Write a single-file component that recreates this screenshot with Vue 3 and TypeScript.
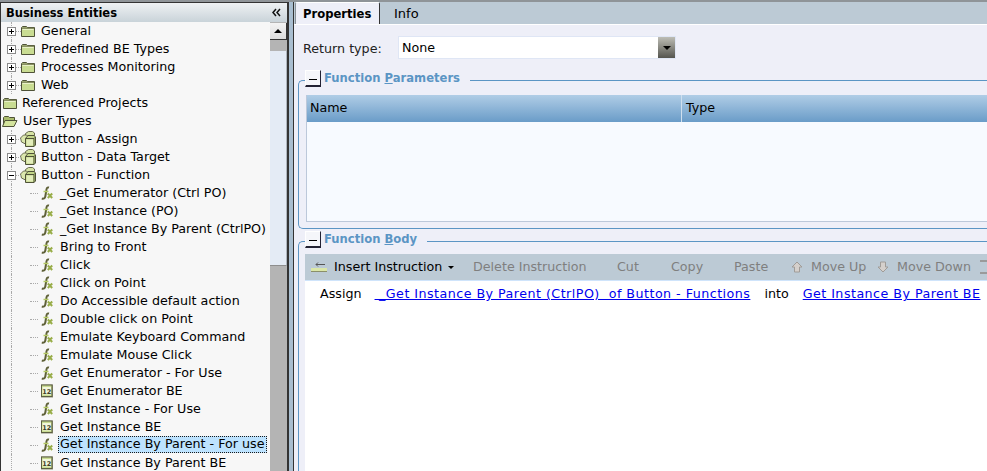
<script setup lang="ts">
type Row = { label: string; level: number; icon: string; toggle?: string; selected?: boolean }
const rows: Row[] = [
  { label: 'General', level: 1, icon: 'folder', toggle: '+' },
  { label: 'Predefined BE Types', level: 1, icon: 'folder', toggle: '+' },
  { label: 'Processes Monitoring', level: 1, icon: 'folder', toggle: '+' },
  { label: 'Web', level: 1, icon: 'folder', toggle: '+' },
  { label: 'Referenced Projects', level: 0, icon: 'folder' },
  { label: 'User Types', level: 0, icon: 'open' },
  { label: 'Button - Assign', level: 1, icon: 'cubes', toggle: '+' },
  { label: 'Button - Data Target', level: 1, icon: 'cubes', toggle: '+' },
  { label: 'Button - Function', level: 1, icon: 'cubes', toggle: '-' },
  { label: '_Get Enumerator (Ctrl PO)', level: 2, icon: 'fx' },
  { label: '_Get Instance (PO)', level: 2, icon: 'fx' },
  { label: '_Get Instance By Parent (CtrlPO)', level: 2, icon: 'fx' },
  { label: 'Bring to Front', level: 2, icon: 'fx' },
  { label: 'Click', level: 2, icon: 'fx' },
  { label: 'Click on Point', level: 2, icon: 'fx' },
  { label: 'Do Accessible default action', level: 2, icon: 'fx' },
  { label: 'Double click on Point', level: 2, icon: 'fx' },
  { label: 'Emulate Keyboard Command', level: 2, icon: 'fx' },
  { label: 'Emulate Mouse Click', level: 2, icon: 'fx' },
  { label: 'Get Enumerator - For Use', level: 2, icon: 'fx' },
  { label: 'Get Enumerator BE', level: 2, icon: 'num' },
  { label: 'Get Instance - For Use', level: 2, icon: 'fx' },
  { label: 'Get Instance BE', level: 2, icon: 'num' },
  { label: 'Get Instance By Parent - For use', level: 2, icon: 'fx', selected: true },
  { label: 'Get Instance By Parent BE', level: 2, icon: 'num' }
]
</script>

<template>
  <div class="app">
    <aside class="left">
      <header class="left-head">
        <span>Business Entities</span>
        <svg class="collapse" width="9" height="9" viewBox="0 0 9 9">
          <path d="M4 1L1 4.500l3 3.500M8 1L5 4.500l3 3.500" fill="none" stroke="#111" stroke-width="1.5" />
        </svg>
      </header>
      <div class="left-body">
        <ul class="tree">
          <li v-for="r in rows" :key="r.label" class="row" :class="'lvl' + r.level">
            <span v-if="r.level > 0" class="guide"></span>
            <span v-if="r.level === 2" class="dash"></span>
            <span v-if="r.toggle" class="toggle">
              <svg width="9" height="9" viewBox="0 0 9 9">
                <rect x="0.5" y="0.5" width="8" height="8" fill="#fff" stroke="#8a8a8a" />
                <path d="M2 4.500h5" stroke="#000" />
                <path v-if="r.toggle === '+'" d="M4.500 2v5" stroke="#000" />
              </svg>
              <span class="tdash"></span>
            </span>
            <svg v-if="r.icon === 'folder'" class="ico" width="14" height="16" viewBox="0 0 14 16">
              <path d="M.5 13.500v-9l1-1h4l1 1h7v9z" fill="#c9dc92" stroke="#4f5238" />
              <path d="M1 4.500h12v1.200H1z" fill="#6b6e4c" />
              <path d="M1.500 6.500h11" stroke="#e9f1c8" />
            </svg>
            <svg v-else-if="r.icon === 'open'" class="ico open" width="16" height="16" viewBox="0 0 16 16">
              <path d="M1.500 13.500v-9l1-1h4l1 1h5v3" fill="#a9bb6c" stroke="#4f5238" />
              <path d="M.5 13.500l2.500-6h12l-3 6z" fill="#d3e39c" stroke="#4f5238" />
            </svg>
            <svg v-else-if="r.icon === 'cubes'" class="ico cube" width="16" height="16" viewBox="0 0 16 16">
              <path d="M5.500 2.500l3-2h4l2 1.500v3h-9z" fill="#d6e3a4" stroke="#6a6d50" />
              <path d="M.5 7l3-3h3l2 2v5l-3 2-4-2z" fill="#dbe7ad" stroke="#6a6d50" />
              <path d="M5.500 7.500l2.500-3h6l1.500 1.500v8l-1.500 1.500h-8.500z" fill="#c2d588" stroke="#4f5238" />
              <path d="M5.500 7.500h8.500v8M14 7.500l1.500-1.500" fill="none" stroke="#4f5238" />
              <path d="M6.500 8.500h6.500v6h-6.500z" fill="#e3edbb" />
            </svg>
            <svg v-else-if="r.icon === 'fx'" class="ico" width="12" height="14" viewBox="0 0 12 14">
              <path d="M8 1.500C6 1 5.600 2.300 5.300 4.500L4.300 10.500C4 12.300 2.500 13 .8 12.500" fill="none" stroke="#5f6138" stroke-width="2" />
              <path d="M2.500 5.500h5" stroke="#b4c964" stroke-width="1.500" />
              <path d="M6.800 7.500l4.400 4.500M11.200 7.500l-4.400 4.500" stroke="#98ad48" stroke-width="2" />
            </svg>
            <svg v-else class="ico" width="12" height="14" viewBox="0 0 12 14">
              <rect x="0" y="0.500" width="12" height="13" fill="#8e9076" />
              <rect x="0.500" y="1" width="10.500" height="11.500" fill="#c9dc92" stroke="#5c5f42" />
              <rect x="1.500" y="3" width="8.500" height="7.500" fill="#f2f6dc" />
              <text x="5.800" y="9.500" text-anchor="middle" class="numtxt">12</text>
            </svg>
            <span class="label" :class="{ sel: r.selected }">{{ r.label }}</span>
          </li>
        </ul>
        <div class="scroll">
          <div class="sbtn"><i></i></div>
          <div class="strack-a"></div>
          <div class="sthumb"></div>
        </div>
      </div>
    </aside>

    <div class="split"></div>

    <main class="right">
      <nav class="tabs">
        <span class="tab active">Properties</span>
        <span class="tab">Info</span>
      </nav>
      <section class="content">
        <div class="ret">
          <span class="ret-label">Return type:</span>
          <div class="select">
            <span>None</span>
            <span class="drop"><i></i></span>
          </div>
        </div>

        <fieldset class="group params">
          <legend><span class="min"></span><b>Function <u>P</u>arameters</b></legend>
          <div class="table">
            <div class="thead">
              <span class="th name">Name</span>
              <span class="th">Type</span>
            </div>
          </div>
        </fieldset>

        <fieldset class="group body">
          <legend><span class="min"></span><b>Function <u>B</u>ody</b></legend>
          <div class="tools">
            <span class="tool main">
              <svg class="insert" width="16" height="12" viewBox="0 0 16 12">
                <rect x="0" y="7" width="16" height="4" fill="#dbe7a8" />
                <rect x="0" y="10" width="16" height="1" fill="#8a8f6a" />
                <path d="M5 3.500h9M5 3.500l2-2M5 3.500l2 2" stroke="#555" fill="none" />
              </svg>
              <span>Insert Instruction</span>
              <i class="caret"></i>
            </span>
            <span class="tool del">Delete Instruction</span>
            <span class="tool cut">Cut</span>
            <span class="tool copy">Copy</span>
            <span class="tool paste">Paste</span>
            <span class="tool up">
              <svg width="12" height="12" viewBox="0 0 12 12"><path d="M6 1l5 5H8.500v5h-5V6H1z" fill="#d5d0cc" stroke="#a09c98" /></svg>
              Move Up
            </span>
            <span class="tool down">
              <svg width="12" height="12" viewBox="0 0 12 12"><path d="M6 11l5-5H8.500V1h-5v5H1z" fill="#d5d0cc" stroke="#a09c98" /></svg>
              Move Down
            </span>
            <span class="more"></span>
          </div>
          <div class="stmt">
            <span class="word">Assign</span>
            <a class="l1">&nbsp;_Get Instance By Parent (CtrlPO)&nbsp; of Button - Functions</a>
            <span class="word into">into</span>
            <a class="l2">Get Instance By Parent BE</a>
          </div>
        </fieldset>
      </section>
    </main>
  </div>
</template>

<style>
html, body { margin: 0; overflow: hidden; background: #fff; }
</style>

<style scoped>
.app {
  width: 987px;
  height: 471px;
  display: flex;
  overflow: hidden;
  font: 12.7px/18px "DejaVu Sans", sans-serif;
  color: #000;
  background: #bccad5;
  border-top: 2px solid #8f9498;
  box-sizing: border-box;
}
b { font-weight: bold; }
.left {
  width: 289px;
  flex: none;
  display: flex;
  flex-direction: column;
  background: #f7f7f7;
  border-left: 1px solid #333;
  border-right: 2px solid #333;
  border-top: 1px solid #333;
  box-sizing: border-box;
}
.left-head {
  height: 19px;
  flex: none;
  display: flex;
  justify-content: space-between;
  align-items: center;
  padding: 0 6px 0 5px;
  font-weight: bold;
  font-size: 11.5px;
  background: linear-gradient(#eef1f3, #c9d3d9);
}
.left-body { flex: 1; display: flex; min-height: 0; }
.tree { flex: 1; margin: 0; padding: 0; list-style: none; overflow: hidden; min-width: 0; }
.row { height: 18px; display: flex; align-items: center; position: relative; white-space: nowrap; }
.lvl0 { padding-left: 1px; }
.lvl0 .ico { margin-right: 4px; }
.lvl0 .ico:not(.open) { margin-left: 1px; }
.lvl1 { padding-left: 6px; }
.lvl1 .ico { margin-right: 5px; }
.lvl1 .cube { margin-left: -1px; margin-right: 4px; }
.lvl2 { padding-left: 29px; }
.lvl2 .ico { margin-right: 6px; }
.guide { position: absolute; left: 10px; top: 0; bottom: 0; border-left: 1px dotted #aaa; }
.dash { width: 8px; flex: none; margin-right: 3px; border-top: 1px dotted #aaa; }
.toggle { display: flex; align-items: center; position: relative; width: 14px; flex: none; }
.toggle svg { display: block; position: relative; background: #fff; }
.tdash { width: 5px; border-top: 1px dotted #aaa; }
.ico { flex: none; display: block; }
.numtxt { font: bold 6.5px "DejaVu Sans", sans-serif; fill: #3d3f28; }
.label { padding: 0 1px; line-height: 16px; margin-top: -1px; }
.sel { background: #bde3ff; outline: 1px dotted #1a1a1a; outline-offset: -1px; margin: -1px 0 0 -1px; padding: 0 3px 1px 2px; line-height: 16px; }
.scroll { width: 17px; flex: none; display: flex; flex-direction: column; background: #b4b4b4; padding-top: 1px; box-sizing: border-box; }
.sbtn {
  height: 17px;
  flex: none;
  background: linear-gradient(#f4f4f4, #dcdcdc);
  border-right: 1px solid #333;
  border-bottom: 1px solid #333;
  box-sizing: border-box;
  display: flex;
  align-items: center;
  justify-content: center;
}
.sbtn i { border: 4px solid transparent; border-bottom: 4px solid #000; border-top: 0; }
.strack-a { height: 11px; flex: none; }
.sthumb { height: 215px; flex: none; background: #e4ebf5; border-right: 1px solid #aeb5bd; border-bottom: 1px solid #8e8e8e; box-sizing: border-box; }
.split {
  width: 5px;
  flex: none;
  background: #a9bed0;
  border-right: 1px solid #333;
  box-sizing: border-box;
}
.right { flex: 1; min-width: 0; display: flex; flex-direction: column; }
.tabs {
  height: 22px;
  flex: none;
  display: flex;
  background: #bccad5;
  padding-left: 1px;
}
.tab { height: 22px; line-height: 23px; margin-left: 14px; font-size: 13px; }
.tab.active {
  background: #eeeff8;
  font-weight: bold;
  font-size: 11.6px;
  margin-left: 0;
  padding-left: 7px;
  width: 85px;
  box-sizing: border-box;
  border-left: 1px solid #8a9299;
  border-right: 1px solid #333;
  border-top: 1px solid #fff;
  border-radius: 2px 2px 0 0;
}
.content { flex: 1; min-height: 0; background: #eeeff8; border-top: 1px solid #fff; padding-left: 4px; overflow: hidden; }
.ret { display: flex; align-items: center; height: 23px; margin-top: 11px; padding-left: 5px; }
.ret-label { width: 95px; flex: none; color: #222; padding-top: 2px; }
.select {
  width: 278px;
  height: 23px;
  box-sizing: border-box;
  background: #fff;
  display: flex;
  justify-content: space-between;
  border: 1px solid #dfe6f5;
  padding-left: 3px;
  line-height: 21px;
}
.drop {
  width: 17px;
  background: linear-gradient(#bdbdb5, #55554f);
  display: flex;
  align-items: center;
  justify-content: center;
}
.drop i { border: 4px solid transparent; border-top: 4px solid #000; border-bottom: 0; }
.group {
  margin: 0;
  padding: 0 0 0 7px;
  border: 0;
  border-top: 1px solid #5b95c4;
  border-left: 1px solid #5b95c4;
  border-radius: 5px 0 0 5px;
  min-width: 0;
}
.params { margin-top: 11px; height: 159px; border-bottom: 1px solid #5b95c4; box-sizing: border-box; }
.body { margin-top: 2px; height: 245px; box-sizing: border-box; }
legend {
  padding: 0 10px 0 0;
  margin-left: -1px;
  height: 20px;
  display: flex;
  align-items: flex-start;
  color: #5b95c4;
  background: #eeeff8;
  font-size: 11.6px;
  line-height: 17px;
}
.min {
  width: 16px;
  height: 17px;
  box-sizing: border-box;
  margin-right: 3px;
  background: linear-gradient(#000, #000) center 8px / 8px 1px no-repeat #f5f6fa;
  border-right: 1px solid #223;
  border-bottom: 2px solid #223;
  border-top: 1px solid #fff;
  border-left: 1px solid #fff;
}
.table { margin-top: 5px; height: 127px; background: #f7faff; border: 1px solid #bcc8da; border-top: 0; border-right: 0; box-sizing: border-box; }
.thead {
  height: 27px;
  display: flex;
  background: linear-gradient(#b0cde6, #6a9cc8);
}
.th { line-height: 26px; padding-left: 4px; }
.th.name { width: 375px; padding-left: 3px; border-right: 1px solid #cfdfee; box-sizing: border-box; }
.tools {
  height: 27px;
  margin: 3px 0 0 -1px;
  background: #bccad5;
  border-bottom: 1px solid #cfe4fb;
  box-sizing: border-box;
  display: flex;
  align-items: center;
  color: #7f7f7f;
  white-space: nowrap;
}
.tool { display: flex; align-items: center; gap: 8px; flex: none; }
.main { color: #000; margin-left: 6px; width: 162px; gap: 7px; }
.caret { border: 3.5px solid transparent; border-top: 3.5px solid #000; border-bottom: 0; margin-left: -1px; }
.del { width: 144px; }
.cut { width: 54px; }
.copy { width: 63px; }
.paste { width: 57px; }
.up { width: 86px; }
.down { width: 103px; }
.more { width: 8px; height: 10px; border-top: 2px solid #9a9a9a; border-bottom: 2px solid #9a9a9a; flex: none; }
.stmt { background: #fff; height: 200px; margin-left: -1px; padding: 4px 0 0 15px; white-space: nowrap; display: flex; box-sizing: border-box; }
.word { color: #000; }
a { color: #0000ee; text-decoration: underline; white-space: pre; letter-spacing: 0.46px; }
.l1 { margin-left: 13px; }
.into { margin-left: 14px; }
.l2 { margin-left: 14px; }
</style>
